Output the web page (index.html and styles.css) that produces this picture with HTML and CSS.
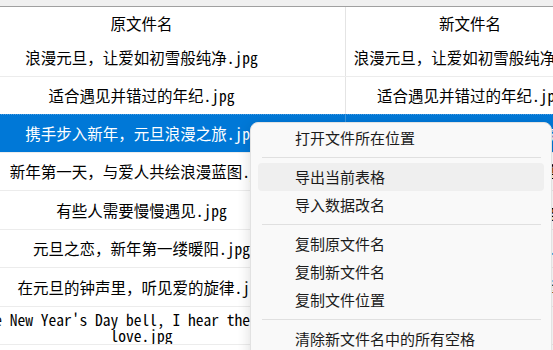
FILE: index.html
```html
<!DOCTYPE html>
<html lang="zh-CN">

<head>
    <meta charset="UTF-8">
    <meta name="viewport" content="width=device-width, initial-scale=1.0">
    <title>批量改名</title>
    <link rel="stylesheet" href="styles.css">
</head>

<body>

    <div class="window">
        <div class="toolbar-edge"></div>

        <div class="grid">
            <div class="row header">
                <div class="cell"><span class="txt">原文件名</span></div>
                <div class="cell"><span class="txt">新文件名</span></div>
            </div>
            <div class="row">
                <div class="cell"><span class="txt">浪漫元旦，让爱如初雪般纯净.jpg</span></div>
                <div class="cell"><span class="txt">浪漫元旦，让爱如初雪般纯净.jpg</span></div>
            </div>
            <div class="row">
                <div class="cell"><span class="txt">适合遇见并错过的年纪.jpg</span></div>
                <div class="cell"><span class="txt">适合遇见并错过的年纪.jpg</span></div>
            </div>
            <div class="row selected">
                <div class="cell"><span class="txt">携手步入新年，元旦浪漫之旅.jpg</span></div>
                <div class="cell"><span class="txt">携手步入新年，元旦浪漫之旅.jpg</span></div>
            </div>
            <div class="row">
                <div class="cell"><span class="txt">新年第一天，与爱人共绘浪漫蓝图.jpg</span></div>
                <div class="cell"><span class="txt">新年第一天，与爱人共绘浪漫蓝图.jpg</span></div>
            </div>
            <div class="row">
                <div class="cell"><span class="txt">有些人需要慢慢遇见.jpg</span></div>
                <div class="cell"><span class="txt">有些人需要慢慢遇见.jpg</span></div>
            </div>
            <div class="row">
                <div class="cell"><span class="txt">元旦之恋，新年第一缕暖阳.jpg</span></div>
                <div class="cell"><span class="txt">元旦之恋，新年第一缕暖阳.jpg</span></div>
            </div>
            <div class="row">
                <div class="cell"><span class="txt">在元旦的钟声里，听见爱的旋律.jpg</span></div>
                <div class="cell"><span class="txt">在元旦的钟声里，听见爱的旋律.jpg</span></div>
            </div>
            <div class="row last">
                <div class="cell"><span class="txt wrap">In the New Year's Day bell, I hear the melody of love.jpg</span></div>
                <div class="cell"><span class="txt wrap">In the New Year's Day bell, I hear the melody of love.jpg</span></div>
            </div>
        </div>

        <!-- right click menu -->
        <div class="context-menu">
            <div class="menu-item">打开文件所在位置</div>
            <div class="menu-sep"></div>
            <div class="menu-item hover">导出当前表格</div>
            <div class="menu-item">导入数据改名</div>
            <div class="menu-sep"></div>
            <div class="menu-item">复制原文件名</div>
            <div class="menu-item">复制新文件名</div>
            <div class="menu-item">复制文件位置</div>
            <div class="menu-sep"></div>
            <div class="menu-item">清除新文件名中的所有空格</div>
        </div>
    </div>

</body>

</html>
```

FILE: styles.css
```css
body {
    margin: 0;
    background-color: #fff;
    overflow: hidden;
}

.window {
    position: relative;
    width: 553px;
    height: 350px;
    overflow: hidden;
    font-family: "Noto Sans Mono CJK SC", "Noto Sans CJK SC", monospace;
    color: #000;
}

.toolbar-edge {
    height: 6px;
    background-color: #f0f0f0;
    border-bottom: 1px solid #a0a0a0;
}

/* grid is scrolled a bit to the right, so first column starts off screen */
.grid {
    margin-left: -62px;
    width: 660px;
}

.row {
    display: grid;
    grid-template-columns: 408px 249px;
    height: 38.5px;
    box-sizing: border-box;
    border-bottom: 1px solid #ececec;
}

.row.header {
    height: 31px;
    border-bottom: none;
}

.cell {
    display: flex;
    align-items: center;
    overflow: hidden;
    border-right: 1px solid #e4e4e4;
    font-size: 15.5px;
    line-height: 16px;
}

.txt {
    width: 100%;
    text-align: center;
    white-space: nowrap;
}

.txt.wrap {
    white-space: normal;
}

.row.last .cell {
    padding-top: 3px;
}

.row.selected {
    background-color: #0078d7;
    color: #fff;
    border-top: 1px dotted #4a9be0;
    margin-top: -1px;
}

.row.selected .cell {
    border-right-color: #3d95dd;
}

.context-menu {
    position: absolute;
    left: 250px;
    top: 122px;
    width: 302px;
    height: 250px;
    box-sizing: border-box;
    padding-top: 1px;
    background-color: #f9f9f9;
    border: 1px solid #e2e2e2;
    border-radius: 8px;
    box-shadow: 0 4px 14px rgba(0, 0, 0, 0.14);
    font-family: "Noto Sans CJK SC", sans-serif;
    font-size: 15px;
    color: #1b1b1b;
}

.menu-item {
    height: 28px;
    line-height: 28px;
    margin: 0 7px 0 7px;
    padding-left: 37px;
    border-radius: 4px;
}

.menu-item.hover {
    background-color: #efefef;
}

.menu-sep {
    height: 1px;
    margin: 5px 10px 5px 11px;
    background-color: #e0e0e0;
}
```
